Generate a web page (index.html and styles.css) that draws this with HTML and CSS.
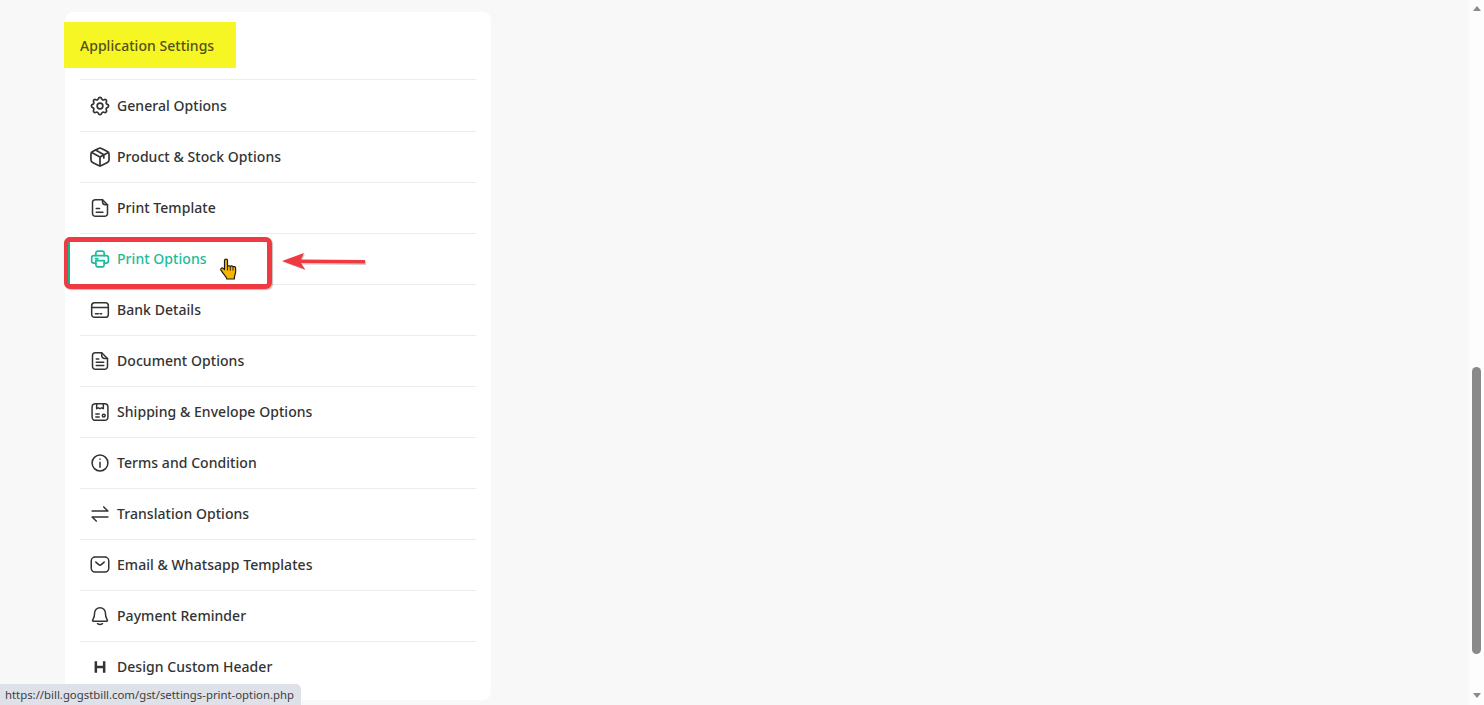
FILE: index.html
```html
<!DOCTYPE html>
<html>
<head>
  <title>Application Settings</title>
  <meta name="viewport" content="width=device-width, initial-scale=1.0">
  <link rel="stylesheet" href="styles.css">
</head>
<body>
  <div class="page">
    <main class="content">
      <div class="settings-card">
        <h2 class="card-title">Application Settings</h2>
        <ul class="settings-list">
          <li class="settings-item">
            <a class="settings-link">
              <svg class="icon" viewBox="1.500 1.500 21 21"><path d="M10.300 4.300c.4-1.800 3-1.800 3.400 0a1.700 1.700 0 0 0 2.600 1.100c1.500-.9 3.300.8 2.400 2.400a1.700 1.700 0 0 0 1 2.500c1.800.4 1.800 3 0 3.400a1.700 1.700 0 0 0-1 2.600c.9 1.500-.9 3.300-2.400 2.400a1.700 1.700 0 0 0-2.600 1c-.4 1.800-3 1.800-3.400 0a1.700 1.700 0 0 0-2.600-1c-1.500.9-3.300-.9-2.400-2.400a1.700 1.700 0 0 0-1-2.600c-1.800-.4-1.800-3 0-3.400a1.700 1.700 0 0 0 1-2.500c-.9-1.600.9-3.300 2.400-2.400a1.700 1.700 0 0 0 2.600-1.100z"/><circle cx="12" cy="12" r="3"/></svg>
              <span class="link-text">General Options</span>
            </a>
          </li>
          <li class="settings-item">
            <a class="settings-link">
              <svg class="icon" viewBox="1.500 1.500 21 21"><path d="M10.500 3l-6.300 3.300A3 3 0 0 0 2.500 9v6a3 3 0 0 0 1.700 2.700l6.300 3.300a3.300 3.300 0 0 0 3 0l6.300-3.300a3 3 0 0 0 1.700-2.700V9a3 3 0 0 0-1.700-2.700L13.500 3a3.300 3.300 0 0 0-3 0z"/><path d="M3.300 7.300L12 12l8.700-4.700M12 12v9.300M7.500 4.700l8.500 4.900v3.400"/></svg>
              <span class="link-text">Product &amp; Stock Options</span>
            </a>
          </li>
          <li class="settings-item">
            <a class="settings-link">
              <svg class="icon" viewBox="0 0 24 24"><path d="M6.500 2H15l6 6v10.500a3.500 3.500 0 0 1-3.500 3.500h-11A3.500 3.500 0 0 1 3 18.500v-13A3.500 3.500 0 0 1 6.500 2z"/><path d="M15 2v2.500A3.500 3.500 0 0 0 18.500 8H21M7.500 12.500h4M7.500 17h8"/></svg>
              <span class="link-text">Print Template</span>
            </a>
          </li>
          <li class="settings-item">
            <a class="settings-link active">
              <svg class="icon" viewBox="0 0 24 24"><path d="M7 8V5a2.500 2.500 0 0 1 2.500-2.500h5A2.500 2.500 0 0 1 17 5v3"/><path d="M7 17H4.500A2.500 2.500 0 0 1 2 14.500v-4A2.500 2.500 0 0 1 4.500 8h15a2.500 2.500 0 0 1 2.500 2.500v4a2.500 2.500 0 0 1-2.500 2.500H17"/><path d="M7 14h10v5a2.500 2.500 0 0 1-2.500 2.500h-5A2.500 2.500 0 0 1 7 19zM6.500 11.500h3"/></svg>
              <span class="link-text">Print Options</span>
            </a>
          </li>
          <li class="settings-item">
            <a class="settings-link">
              <svg class="icon" viewBox="0 0 24 24"><rect x="2" y="3.300" width="20" height="17.500" rx="3.500"/><path d="M2 9h20M6.500 16.500H10M12 16.500h2"/></svg>
              <span class="link-text">Bank Details</span>
            </a>
          </li>
          <li class="settings-item">
            <a class="settings-link">
              <svg class="icon" viewBox="0 0 24 24"><path d="M6.500 2H14l7 7v9.500a3.500 3.500 0 0 1-3.500 3.500h-11A3.500 3.500 0 0 1 3 18.500v-13A3.500 3.500 0 0 1 6.500 2z"/><path d="M14 2v3.500A3.500 3.500 0 0 0 17.500 9H21M7.500 9.500h3M7.500 13.500h9M7.500 17.500h9"/></svg>
              <span class="link-text">Document Options</span>
            </a>
          </li>
          <li class="settings-item">
            <a class="settings-link">
              <svg class="icon" viewBox="0 0 24 24"><rect x="2.500" y="2" width="19" height="20" rx="4"/><path d="M8 2v6l2-1 2 1 2-1 2 1V2M7 14.500h4M7 18h4"/><circle cx="16.500" cy="16.300" r="1.700"/></svg>
              <span class="link-text">Shipping &amp; Envelope Options</span>
            </a>
          </li>
          <li class="settings-item">
            <a class="settings-link">
              <svg class="icon" viewBox="0 0 24 24"><circle cx="12" cy="12" r="9.500"/><path d="M12 11v6M12 7.200v.3"/></svg>
              <span class="link-text">Terms and Condition</span>
            </a>
          </li>
          <li class="settings-item">
            <a class="settings-link">
              <svg class="icon" viewBox="0 0 24 24"><path d="M2.500 8.500h19l-5-5M21.500 15.500h-19l5 5"/></svg>
              <span class="link-text">Translation Options</span>
            </a>
          </li>
          <li class="settings-item">
            <a class="settings-link">
              <svg class="icon" viewBox="0 0 24 24"><rect x="1.500" y="2.500" width="21" height="18" rx="4.500"/><path d="M7 8.500l3.500 3a2.300 2.300 0 0 0 3 0l3.500-3"/></svg>
              <span class="link-text">Email &amp; Whatsapp Templates</span>
            </a>
          </li>
          <li class="settings-item">
            <a class="settings-link">
              <svg class="icon" viewBox="0 0 24 24"><path d="M12 2a6.500 6.500 0 0 0-6.500 6.500c0 5.500-1.700 7-2.400 8.500-.3.700.1 1.200.8 1.200h16.200c.7 0 1.100-.5.800-1.200-.7-1.500-2.400-3-2.400-8.500A6.500 6.500 0 0 0 12 2z"/><path d="M9 21.200c1.800 1.100 4.200 1.100 6 0"/></svg>
              <span class="link-text">Payment Reminder</span>
            </a>
          </li>
          <li class="settings-item">
            <a class="settings-link">
              <svg class="icon icon-bold" viewBox="0 0 24 24"><path d="M7 5v14M17 5v14M7 12h10"/></svg>
              <span class="link-text">Design Custom Header</span>
            </a>
          </li>
        </ul>
      </div>
    </main>
    <div class="scrollbar">
      <span class="scroll-up"></span>
      <span class="scroll-thumb"></span>
      <span class="scroll-down"></span>
    </div>
  </div>

  <!-- annotation drawn over the screenshot -->
  <div class="note-box"></div>
  <svg class="note-arrow" viewBox="0 0 86 20">
    <path class="arrow-shadow" d="M1 10L23 2 20 8.500 84 9V13L20 12.500 24 18.500z"/>
    <path class="arrow-fill" d="M0 9L22 1 19 7.500 83 8V11.500L19 11 23 17.500z"/>
  </svg>
  <svg class="hand-cursor" viewBox="0 0 18 24">
    <path d="M4.500 2.500c0-1.800 3-1.800 3 0v6c.6-1 2.400-1 2.800 0 .6-.9 2.300-.8 2.700.3.800-.6 2.500-.2 2.600 1.200.2 3 .1 5.600-.8 7.600-.5 1.200-.5 2.400-.5 3.400H6.800c0-1.500-1.200-2.700-2.800-4.600-1.200-1.500-2.200-3-3-4.300-.8-1.500 1-2.900 2.300-1.700l1.200 1.100z"/>
    <path class="hand-lines" d="M7.500 8.500v4M10.300 8.800v3.700M13 9.100v3.400"/>
  </svg>
  <div class="status-bubble">https://bill.gogstbill.com/gst/settings-print-option.php</div>
</body>
</html>
```

FILE: styles.css
```css
html, body {
  height: 100%;
}
body {
  margin: 0;
  overflow: hidden;
  background-color: #f8f8f8;
  font-family: "Noto Sans", sans-serif;
}
.page {
  display: flex;
  height: 705px;
}
.content {
  flex: 1;
  padding: 12px 0 0 65px;
}
.settings-card {
  width: 426px;
  height: 688px;
  padding: 10px 15px 0;
  box-sizing: border-box;
  background-color: #fff;
  border-radius: 8px;
}
.card-title {
  width: 172px;
  height: 46px;
  margin: 0 0 11px -16px;
  padding: 1px 0 0 16px;
  box-sizing: border-box;
  background-color: #f5f624;
  color: #54501c;
  font-size: 14px;
  font-weight: 500;
  letter-spacing: 0.03px;
  line-height: 46px;
}
.settings-list {
  margin: 0;
  padding: 0;
  list-style: none;
}
.settings-item {
  border-top: 1px solid #ececec;
}
.settings-link {
  position: relative;
  display: flex;
  align-items: center;
  gap: 7px;
  height: 50px;
  padding-left: 10px;
  color: #333;
  font-size: 14px;
  font-weight: 500;
  letter-spacing: 0.05px;
}
.settings-item:first-child .settings-link {
  height: 51px;
}
.link-text {
  margin-bottom: 2px;
}
.settings-item:first-child .link-text {
  margin-bottom: 0;
}
.settings-link.active {
  color: #1abc9c;
}
.settings-link.active::before {
  content: "";
  position: absolute;
  left: -12px;
  top: 3px;
  bottom: 0;
  width: 2px;
  background-color: #12b886;
}
.icon {
  width: 20px;
  height: 20px;
  flex-shrink: 0;
  fill: none;
  stroke: #333;
  stroke-width: 1.800;
  stroke-linecap: round;
  stroke-linejoin: round;
}
.active .icon {
  stroke: #1abc9c;
  stroke-width: 2;
}
.icon-bold {
  stroke-width: 3;
  stroke-linecap: butt;
}
.scrollbar {
  display: flex;
  flex-direction: column;
  align-items: center;
  width: 15px;
  background-color: #fdfdfd;
}
.scroll-up {
  margin-top: 6px;
  border: 4.500px solid transparent;
  border-top: 0;
  border-bottom: 5px solid #8a8a8a;
}
.scroll-thumb {
  width: 9px;
  height: 287px;
  margin-top: 356px;
  background-color: #8a8a8a;
  border-radius: 5px;
}
.scroll-down {
  margin-top: 39px;
  border: 4.500px solid transparent;
  border-bottom: 0;
  border-top: 5px solid #8a8a8a;
}
.note-box {
  position: absolute;
  left: 64px;
  top: 237px;
  width: 208px;
  height: 52px;
  box-sizing: border-box;
  border-style: solid;
  border-color: #ee3a40;
  border-width: 5px 5px 5px 4px;
  border-radius: 6px;
  box-shadow: 1px 1px 1px rgba(0, 0, 0, 0.25);
}
.note-arrow {
  position: absolute;
  left: 282px;
  top: 252px;
  width: 86px;
  height: 20px;
}
.arrow-fill {
  fill: #ee3a40;
}
.arrow-shadow {
  fill: #aaa;
  opacity: 0.6;
}
.hand-cursor {
  position: absolute;
  left: 220px;
  top: 258px;
  width: 18px;
  height: 24px;
}
.hand-cursor path {
  fill: #f7b500;
  stroke: #1a1a1a;
  stroke-width: 1.200;
  stroke-linejoin: round;
}
.hand-cursor .hand-lines {
  fill: none;
  stroke-width: 0.900;
}
.status-bubble {
  position: absolute;
  left: 0;
  bottom: 0;
  height: 21px;
  padding: 0 7px 0 5px;
  background-color: #dfe1e8;
  border-top-right-radius: 5px;
  color: #3c4043;
  font-size: 11.350px;
  line-height: 21px;
  white-space: nowrap;
}
```
